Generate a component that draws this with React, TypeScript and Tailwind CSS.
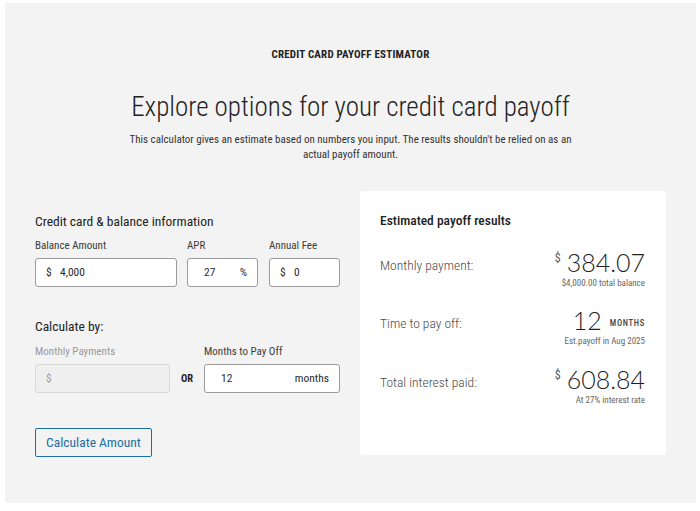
function Field({
  label,
  prefix,
  value,
  suffix,
  width,
  disabled,
  valueClass,
}: {
  label: string;
  prefix?: string;
  value?: string;
  suffix?: string;
  width: string;
  disabled?: boolean;
  valueClass?: string;
}) {
  return (
    <div className={`flex flex-col ${width}`}>
      <div className={`text-[11px] leading-[14px] ${disabled ? 'text-[#9a9a9a]' : 'text-[#3c3c3c]'}`}>{label}</div>
      <div
        className={`mt-[5px] flex h-[29px] items-center rounded-[3px] border text-[11.5px] ${
          disabled ? 'border-[#d9d9d9] bg-[#efefef] text-[#a0a0a0]' : 'border-[#9b9b9b] bg-white text-[#2b2b2b]'
        }`}
      >
        {prefix && <span className="ml-[10px] w-[14px]">{prefix}</span>}
        <span className={`flex-1 ${valueClass ?? ''}`}>{value}</span>
        {suffix && <span className="mr-[10px]">{suffix}</span>}
      </div>
    </div>
  );
}

function ResultRow({
  label,
  value,
  dollar,
  unit,
  caption,
  className,
}: {
  label: string;
  value: string;
  dollar?: boolean;
  unit?: string;
  caption: string;
  className?: string;
}) {
  return (
    <div className={`flex items-start justify-between ${className ?? ''}`}>
      <div className="mt-[9px] text-[13.5px] font-light leading-[18px] text-[#4a4a4a]">{label}</div>
      <div className="flex flex-col items-end">
        <div className="flex h-[30px] items-center">
          {dollar && <span className="-mt-[8px] mr-[6px] text-[12px] text-[#555]">$</span>}
          <span className="font-['Lato',sans-serif] text-[25px] font-light leading-[30px] text-[#1f1f1f] [font-stretch:100%]">{value}</span>
          {unit && <span className="ml-[8px] mt-[6px] text-[8.5px] font-medium tracking-[0.7px] text-[#444]">{unit}</span>}
        </div>
        <div className="text-[9px] leading-[12px] text-[#666]">{caption}</div>
      </div>
    </div>
  );
}

export default function App() {
  return (
    <div className="h-[511px] w-[700px] bg-white pl-[5px] pt-[3px] font-['Roboto',sans-serif] [font-stretch:87.5%] text-[#2b2b2b]">
      <div className="flex h-[500px] w-[691px] flex-col items-center bg-[#f3f3f3] pt-[45px]">
        <div className="text-[11px] font-bold leading-[14px] tracking-[0.2px] text-[#222]">CREDIT CARD PAYOFF ESTIMATOR</div>
        <h1 className="mt-[27px] text-[27px] font-light leading-[36px] text-[#222]">Explore options for your credit card payoff</h1>
        <p className="mt-[7px] w-[452px] text-center text-[11px] leading-[15px] text-[#333]">
          This calculator gives an estimate based on numbers you input. The results shouldn't be relied on as an actual payoff
          amount.
        </p>

        <div className="mt-[29px] flex w-full">
          <div className="ml-[30px] flex w-[305px] flex-col">
            <div className="mt-[21px] text-[13.5px] leading-[18px] text-[#222]">Credit card &amp; balance information</div>
            <div className="mt-[9px] flex">
              <Field label="Balance Amount" prefix="$" value="4,000" width="w-[142px]" />
              <Field label="APR" value="27" suffix="%" width="ml-[10px] w-[71px]" valueClass="pl-[16px]" />
              <Field label="Annual Fee" prefix="$" value="0" width="ml-[11px] w-[71px]" />
            </div>

            <div className="mt-[30px] text-[13.5px] leading-[18px] text-[#222]">Calculate by:</div>
            <div className="mt-[10px] flex items-end">
              <Field label="Monthly Payments" prefix="$" width="w-[135px]" disabled />
              <div className="flex h-[29px] w-[34px] items-center justify-center text-[10.5px] font-bold text-[#222]">OR</div>
              <Field label="Months to Pay Off" value="12" suffix="months" width="w-[136px]" valueClass="pl-[16px]" />
            </div>

            <button className="mt-[35px] h-[29px] w-[117px] rounded-[2px] border-[1.5px] border-[#1b6ea6] text-[13.5px] text-[#1b6ea6]">
              Calculate Amount
            </button>
          </div>

          <div className="ml-[20px] h-[264px] w-[306px] rounded-[4px] bg-white pl-[20px] pr-[21px] pt-[20px]">
            <div className="text-[13.5px] font-medium leading-[18px] text-[#222]">Estimated payoff results</div>
            <ResultRow className="mt-[18px]" label="Monthly payment:" dollar value="384.07" caption="$4,000.00 total balance" />
            <ResultRow className="mt-[16px]" label="Time to pay off:" value="12" unit="MONTHS" caption="Est.payoff in Aug 2025" />
            <ResultRow className="mt-[17px]" label="Total interest paid:" dollar value="608.84" caption="At 27% interest rate" />
          </div>
        </div>
      </div>
    </div>
  );
}
